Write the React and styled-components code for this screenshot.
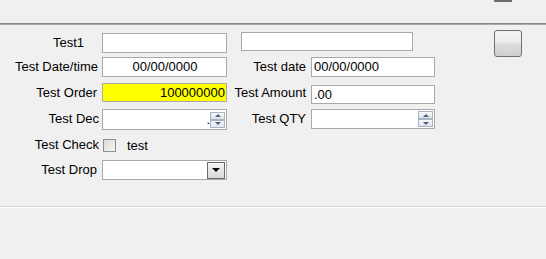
import React from "react";
import styled, { createGlobalStyle } from "styled-components";

const GlobalStyle = createGlobalStyle`
  html, body {
    margin: 0;
    padding: 0;
    background: #f0f0f0;
  }
  body {
    font-family: "Liberation Sans", Arial, sans-serif;
    font-size: 13px;
    color: #000;
  }
`;

const Page = styled.div`
  display: flex;
  flex-direction: column;
  height: 259px;
  overflow: hidden;
`;

const Toolbar = styled.div`
  height: 23px;
  display: flex;
  justify-content: flex-end;
  padding-right: 34px;
  border-bottom: 1px solid #858585;
`;

const ClippedTool = styled.div`
  width: 18px;
  height: 2px;
  background: #6e6e6e;
`;

const FormArea = styled.div`
  box-sizing: border-box;
  height: 183px;
  padding-top: 8px;
  border-top: 1px solid #a8a8a8;
  border-bottom: 1px solid #d6d6d6;
`;

const Footer = styled.div`
  flex: 1;
  border-top: 1px solid #ffffff;
`;

const Grid = styled.div`
  display: grid;
  grid-template-columns: 99px 125px 78px 124px 53px 28px;
  grid-template-rows: 24px 26px 26px 26px 25px 20px;
  column-gap: 3px;
  align-items: start;
`;

const Label = styled.div`
  height: 20px;
  line-height: 20px;
  text-align: right;
  white-space: nowrap;
  overflow: hidden;
  padding-right: ${(p) => p.$pr || 0}px;
`;

const Field = styled.div`
  box-sizing: border-box;
  height: ${(p) => p.$h || 20}px;
  margin-top: ${(p) => p.$mt || 0}px;
  margin-left: ${(p) => p.$ml || 0}px;
  width: ${(p) => (p.$w ? `${p.$w}px` : "auto")};
  border: 1px solid #a9a9a9;
  background: ${(p) => p.$bg || "#ffffff"};
  display: flex;
  align-items: center;
  padding: 0 1px 0 2px;
  grid-column: ${(p) => p.$col || "auto"};
`;

const FieldText = styled.span`
  flex: 1;
  text-align: ${(p) => p.$align || "left"};
  white-space: nowrap;
  overflow: hidden;
  line-height: 18px;
`;

const Spinner = styled.div`
  width: 15px;
  height: 16px;
  display: flex;
  flex-direction: column;
`;

const SpinButton = styled.div`
  box-sizing: border-box;
  height: 8px;
  border: 1px solid #aab4c1;
  background: linear-gradient(#f6f8fa, #dfe5ec);
  display: flex;
  align-items: center;
  justify-content: center;
  &::after {
    content: "";
    border-left: 3px solid transparent;
    border-right: 3px solid transparent;
    ${(p) =>
      p.$up
        ? "border-bottom: 3px solid #4b5f82;"
        : "border-top: 3px solid #4b5f82;"}
  }
`;

const DropButton = styled.div`
  box-sizing: border-box;
  width: 18px;
  height: 17px;
  border: 1px solid #6a6a6a;
  background: linear-gradient(#f4f4f4, #d8d8d8);
  display: flex;
  align-items: center;
  justify-content: center;
  &::after {
    content: "";
    border-left: 4px solid transparent;
    border-right: 4px solid transparent;
    border-top: 4px solid #000;
  }
`;

const CheckRow = styled.div`
  height: 20px;
  display: flex;
  align-items: center;
  padding-left: 1px;
`;

const CheckBox = styled.div`
  box-sizing: border-box;
  width: 13px;
  height: 13px;
  border: 1px solid #8f8f8f;
  background: linear-gradient(135deg, #d9d9d9, #f7f7f7);
`;

const CheckText = styled.span`
  margin-left: 11px;
`;

const SquareButton = styled.div`
  box-sizing: border-box;
  grid-column: 6;
  grid-row: 1 / span 2;
  width: 28px;
  height: 27px;
  margin-top: -3px;
  border: 1px solid #707070;
  border-radius: 3px;
  background: linear-gradient(#f3f3f3 0%, #ececec 45%, #dedede 52%, #cfcfcf 100%);
`;

const Empty = styled.div``;

export default function App() {
  return (
    <>
      <GlobalStyle />
      <Page>
        <Toolbar>
          <ClippedTool />
        </Toolbar>
        <FormArea>
          <Grid>
            <Label $pr={15}>Test1</Label>
            <Field />
            <Field $col="3 / span 2" $ml={11} $w={172} $h={19} $mt={-1} />
            <Empty />
            <SquareButton />

            <Label $pr={1}>Test Date/time</Label>
            <Field>
              <FieldText $align="center">00/00/0000</FieldText>
            </Field>
            <Label $pr={2}>Test date</Label>
            <Field>
              <FieldText>00/00/0000</FieldText>
            </Field>
            <Empty />

            <Label $pr={2}>Test Order</Label>
            <Field $bg="#ffff00" $h={19}>
              <FieldText $align="right">100000000</FieldText>
            </Field>
            <Label $pr={2}>Test Amount</Label>
            <Field $mt={2} $h={19}>
              <FieldText>.00</FieldText>
            </Field>
            <Empty />
            <Empty />

            <Label>Test Dec</Label>
            <Field $h={21}>
              <FieldText $align="right">.</FieldText>
              <Spinner>
                <SpinButton $up />
                <SpinButton />
              </Spinner>
            </Field>
            <Label $pr={2}>Test QTY</Label>
            <Field>
              <FieldText />
              <Spinner>
                <SpinButton $up />
                <SpinButton />
              </Spinner>
            </Field>
            <Empty />
            <Empty />

            <Label>Test Check</Label>
            <CheckRow>
              <CheckBox />
              <CheckText>test</CheckText>
            </CheckRow>
            <Empty />
            <Empty />
            <Empty />
            <Empty />

            <Label $pr={2}>Test Drop</Label>
            <Field>
              <FieldText />
              <DropButton />
            </Field>
          </Grid>
        </FormArea>
        <Footer />
      </Page>
    </>
  );
}
